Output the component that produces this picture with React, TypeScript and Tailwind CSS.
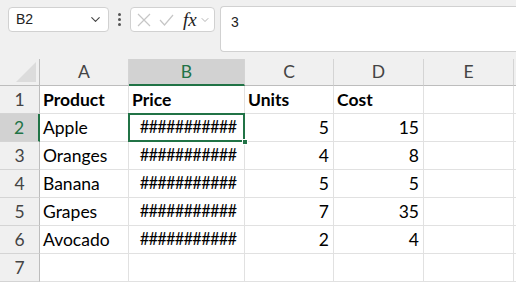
import { ChevronDown } from "lucide-react";

const cols = [
  { key: "A", w: 89 },
  { key: "B", w: 116 },
  { key: "C", w: 89 },
  { key: "D", w: 90 },
  { key: "E", w: 90 },
];

const rows: (string | number | null)[][] = [
  ["Product", "Price", "Units", "Cost", null],
  ["Apple", "###########", 5, 15, null],
  ["Oranges", "###########", 4, 8, null],
  ["Banana", "###########", 5, 5, null],
  ["Grapes", "###########", 7, 35, null],
  ["Avocado", "###########", 2, 4, null],
  [null, null, null, null, null],
];

const font = { fontFamily: "Lato, 'Noto Sans', sans-serif" };

function FormulaBar() {
  return (
    <div className="flex h-[59px] items-start bg-[#f0f0f0] pt-[6px]" style={font}>
      <div className="ml-2 mt-px flex h-[25px] w-[101px] items-center justify-between rounded-[4px] border border-[#d1d1d1] bg-white pl-[7px] pr-[5px] text-[15px] text-[#222]">
        <span style={{ fontFamily: "'Liberation Sans', Arial, sans-serif", fontSize: 14 }}>B2</span>
        <ChevronDown size={15} strokeWidth={1.8} className="text-[#444]" />
      </div>
      <div className="flex h-[26px] w-[21px] flex-col items-center justify-center gap-[2px]">
        <span className="h-[3px] w-[3px] rounded-full bg-[#555]" />
        <span className="h-[3px] w-[3px] rounded-full bg-[#555]" />
        <span className="h-[3px] w-[3px] rounded-full bg-[#555]" />
      </div>
      <div className="mt-px flex h-[25px] w-[85px] items-center rounded-[4px] border border-[#d1d1d1] bg-white pl-[6px] pr-[3px]">
        <svg width="14" height="14" viewBox="0 0 14 14" className="mr-[8px]">
          <path d="M1 1 L13 13 M13 1 L1 13" stroke="#c6c6c6" strokeWidth="1.2" fill="none" />
        </svg>
        <svg width="15" height="12" viewBox="0 0 15 12" className="mr-[9px]">
          <path d="M1 6 L5.5 11 L14 1" stroke="#c6c6c6" strokeWidth="1.2" fill="none" />
        </svg>
        <span
          className="text-[19px] italic leading-none text-[#222]"
          style={{ fontFamily: "'Liberation Serif', 'Times New Roman', serif" }}
        >
          fx
        </span>
        <ChevronDown size={12} strokeWidth={1.5} className="ml-[2px] text-[#999]" />
      </div>
      <div className="ml-[5px] h-[46px] flex-1 rounded-l-[4px] border border-r-0 border-[#d1d1d1] bg-white pl-[10px] pt-[4px] text-[14px] text-[#222]">
        <span style={{ fontFamily: "'Liberation Sans', Arial, sans-serif" }}>3</span>
      </div>
    </div>
  );
}

function Grid() {
  return (
    <div className="bg-white text-[17.5px] leading-none" style={font}>
      <div className="flex h-[27px] bg-[#f0f0f0]">
        <div className="relative w-[40px] shrink-0 border-r border-b border-[#bdbdbd]">
          <svg width="20" height="20" viewBox="0 0 20 20" className="absolute right-[3px] bottom-[3px]">
            <path d="M20 0 L20 20 L0 20 Z" fill="#dcdcdc" />
          </svg>
        </div>
        {cols.map((c) => (
          <div
            key={c.key}
            style={{ width: c.w }}
            className={
              c.key === "B"
                ? "flex shrink-0 items-center justify-center border-r border-b-2 border-r-[#d4d4d4] border-b-[#217346] bg-[#d2d2d2] text-[#217346]"
                : "flex shrink-0 items-center justify-center border-r border-b border-r-[#d4d4d4] border-b-[#bdbdbd] text-[#444]"
            }
          >
            {c.key}
          </div>
        ))}
        <div className="flex-1 border-b border-[#bdbdbd]" />
      </div>
      {rows.map((r, i) => (
        <div key={i} className="flex h-[28px]">
          <div
            className={
              i === 1
                ? "flex w-[40px] shrink-0 items-center justify-center border-r-2 border-b border-r-[#217346] border-b-[#d4d4d4] bg-[#d2d2d2] text-[#217346]"
                : "flex w-[40px] shrink-0 items-center justify-center border-r border-b border-r-[#bdbdbd] border-b-[#d4d4d4] bg-[#f0f0f0] text-[#444]"
            }
          >
            {i + 1}
          </div>
          {cols.map((c, j) => {
            const v = r[j];
            const selected = i === 1 && j === 1;
            const hashes = j === 1 && i > 0;
            return (
              <div
                key={c.key}
                style={{ width: c.w }}
                className={
                  "relative flex shrink-0 items-center border-r border-b border-[#e1e1e1] text-black " +
                  (typeof v === "number" ? "justify-end pr-[4px] " : "pl-[3px] ") +
                  (i === 0 ? "font-bold " : "") +
                  (hashes ? "justify-center pl-0 text-[16.5px] tracking-[-0.8px] " : "") +
                  (selected ? "z-10 " : "")
                }
              >
                {v}
                {selected && (
                  <>
                    <div className="absolute -top-px -left-px -right-px -bottom-px border-2 border-[#217346]" />
                    <div className="absolute -right-[4px] -bottom-[4px] h-[6px] w-[6px] border border-white bg-[#217346]" />
                  </>
                )}
              </div>
            );
          })}
          <div className="flex-1 border-b border-[#e1e1e1]" />
        </div>
      ))}
    </div>
  );
}

export default function App() {
  return (
    <div className="h-[283px] w-[516px] overflow-hidden bg-white">
      <FormulaBar />
      <Grid />
    </div>
  );
}
